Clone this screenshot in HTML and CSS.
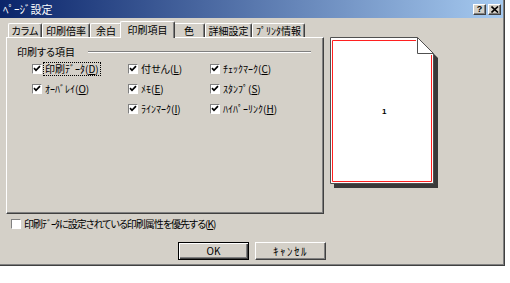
FILE: index.html
```html
<!DOCTYPE html>
<html lang="ja">
<head>
<meta charset="utf-8">
<title>ﾍﾟｰｼﾞ設定</title>
<link rel="stylesheet" href="styles.css">
</head>
<body>
<div class="dialog">
  <div class="titlebar">
    <span class="title">ﾍﾟｰｼﾞ設定</span>
    <div class="tbtns">
      <span class="tbtn help">?</span>
      <span class="tbtn close"><svg width="8" height="7" viewBox="0 0 8 7"><path d="M0.5 0.5 L7 6.5 M7 0.5 L0.5 6.5" stroke="#000" stroke-width="1.6" fill="none"/></svg></span>
    </div>
  </div>
  <div class="content">
    <div class="leftcol">
      <div class="tabs">
        <span class="tab">カラム</span>
        <span class="tab">印刷倍率</span>
        <span class="tab">余白</span>
        <span class="tab active">印刷項目</span>
        <span class="tab">色</span>
        <span class="tab">詳細設定</span>
        <span class="tab">ﾌﾟﾘﾝﾀ情報</span>
      </div>
      <div class="panel">
        <div class="glabel"><span>印刷する項目</span><span class="gline"></span></div>
        <div class="grid">
          <div class="chk"><span class="box"><svg width="8" height="8" viewBox="0 0 8 8"><path d="M1 3.2 L3 5.3 L7 1.2" stroke="#000" stroke-width="1.7" fill="none"/></svg></span><span class="lbl focus">印刷ﾃﾞｰﾀ(<u>D</u>)</span></div>
          <div class="chk"><span class="box"><svg width="8" height="8" viewBox="0 0 8 8"><path d="M1 3.2 L3 5.3 L7 1.2" stroke="#000" stroke-width="1.7" fill="none"/></svg></span><span class="lbl">付せん(<u>L</u>)</span></div>
          <div class="chk"><span class="box"><svg width="8" height="8" viewBox="0 0 8 8"><path d="M1 3.2 L3 5.3 L7 1.2" stroke="#000" stroke-width="1.7" fill="none"/></svg></span><span class="lbl">ﾁｪｯｸﾏｰｸ(<u>C</u>)</span></div>
          <div class="chk"><span class="box"><svg width="8" height="8" viewBox="0 0 8 8"><path d="M1 3.2 L3 5.3 L7 1.2" stroke="#000" stroke-width="1.7" fill="none"/></svg></span><span class="lbl">ｵｰﾊﾞﾚｲ(<u>O</u>)</span></div>
          <div class="chk"><span class="box"><svg width="8" height="8" viewBox="0 0 8 8"><path d="M1 3.2 L3 5.3 L7 1.2" stroke="#000" stroke-width="1.7" fill="none"/></svg></span><span class="lbl">ﾒﾓ(<u>E</u>)</span></div>
          <div class="chk"><span class="box"><svg width="8" height="8" viewBox="0 0 8 8"><path d="M1 3.2 L3 5.3 L7 1.2" stroke="#000" stroke-width="1.7" fill="none"/></svg></span><span class="lbl">ｽﾀﾝﾌﾟ(<u>S</u>)</span></div>
          <div class="chk col2"><span class="box"><svg width="8" height="8" viewBox="0 0 8 8"><path d="M1 3.2 L3 5.3 L7 1.2" stroke="#000" stroke-width="1.7" fill="none"/></svg></span><span class="lbl">ﾗｲﾝﾏｰｸ(<u>I</u>)</span></div>
          <div class="chk"><span class="box"><svg width="8" height="8" viewBox="0 0 8 8"><path d="M1 3.2 L3 5.3 L7 1.2" stroke="#000" stroke-width="1.7" fill="none"/></svg></span><span class="lbl">ﾊｲﾊﾟｰﾘﾝｸ(<u>H</u>)</span></div>
        </div>
      </div>
      <div class="chk bottomchk"><span class="box"></span><span class="lbl">印刷ﾃﾞｰﾀに設定されている印刷属性を優先する(<u>K</u>)</span></div>
    </div>
    <div class="preview">
      <svg width="109" height="152" viewBox="0 0 109 152">
        <polygon points="4,4 91,4 108,21 108,151 4,151" fill="#3a3a3a"/>
        <polygon points="0.5,0.5 87.5,0.5 103.5,16.5 103.5,146.5 0.5,146.5" fill="#fff" stroke="#505050"/>
        <polyline points="86,3.5 2.5,3.5 2.5,144.5 101.5,144.5 101.5,18" fill="none" stroke="#ff2020"/>
        <polyline points="87.5,0.5 87.5,16.5 103.5,16.5" fill="none" stroke="#505050"/>
        <text x="52" y="77" class="pnum">1</text>
      </svg>
    </div>
  </div>
  <div class="buttons">
    <span class="btn default">OK</span>
    <span class="btn cancel">ｷｬﾝｾﾙ</span>
  </div>
</div>
</body>
</html>
```

FILE: styles.css
```css
* { box-sizing: border-box; margin: 0; padding: 0; }
html, body { width: 510px; height: 283px; background: #fff; overflow: hidden; }
body {
  font-family: "Noto Sans CJK JP", "Noto Sans", sans-serif;
  font-size: 10px;
  color: #000;
  font-feature-settings: "palt";
}
.dialog {
  width: 505px;
  height: 266px;
  background: #d4d0c8;
  border-right: 1px solid #404040;
  border-bottom: 1px solid #404040;
  box-shadow: inset -1px -1px #808080;
  display: flex;
  flex-direction: column;
}
.titlebar {
  height: 18px;
  margin-right: 1px;
  background: linear-gradient(to right, #0a246a, #a6caf0);
  display: flex;
  align-items: center;
  padding: 0 2px 0 3px;
}
.title { color: #fff; font-size: 11px; line-height: 14px; }
.tbtns { margin-left: auto; display: flex; gap: 2px; }
.tbtn {
  width: 13px; height: 11px;
  background: #d4d0c8;
  border: 1px solid; border-color: #fff #404040 #404040 #fff;
  box-shadow: inset -1px -1px #808080;
  display: flex; align-items: center; justify-content: center;
  font-family: "Liberation Sans", sans-serif;
  font-weight: bold; font-size: 9px; line-height: 9px;
}
.content { display: flex; padding: 3px 0 0 6px; }
.leftcol { width: 318px; display: flex; flex-direction: column; }
.tabs { display: flex; height: 16px; padding-left: 2px; }
.tab {
  height: 14px; margin-top: 2px;
  border-top: 1px solid #fff; border-left: 1px solid #fff; border-right: 1px solid #404040;
  border-radius: 2px 2px 0 0;
  box-shadow: inset -1px 0 #808080;
  text-align: center; line-height: 13px; white-space: nowrap;
}
.tab:nth-child(1) { width: 34px; }
.tab:nth-child(2) { width: 48px; }
.tab:nth-child(3) { width: 32px; }
.tab:nth-child(4) { width: 55px; }
.tab:nth-child(5) { width: 32px; }
.tab:nth-child(6) { width: 47px; }
.tab:nth-child(7) { width: 53px; }
.tab.active {
  height: 17px; margin: 0 -2px -1px -2px;
  background: #d4d0c8;
  position: relative; z-index: 2;
  line-height: 15px;
}
.panel {
  height: 177px;
  border: 1px solid; border-color: #fff #404040 #404040 #fff;
  box-shadow: inset -1px -1px #808080;
  padding: 8px 0 0 10px;
}
.glabel { display: flex; align-items: center; height: 12px; line-height: 12px; }
.gline {
  margin-left: auto; margin-right: 12px;
  width: 223px; height: 2px;
  border-top: 1px solid #808080; border-bottom: 1px solid #fff;
}
.grid {
  margin-top: 6px; padding-left: 15px;
  display: grid;
  grid-template-columns: 96px 82px 1fr;
  grid-auto-rows: 10px;
  row-gap: 10px;
}
.col2 { grid-column: 2; }
.chk { display: flex; align-items: center; height: 10px; white-space: nowrap; }
.box {
  width: 10px; height: 10px; flex: none;
  background: #fff;
  border: 1px solid; border-color: #808080 #fff #fff #808080;
  display: flex; align-items: center; justify-content: center;
}
.lbl { margin-left: 3px; line-height: 12px; }
.lbl u { text-underline-offset: 1px; }
.focus { outline: 1px dotted #000; outline-offset: 0; padding: 0 1px; margin-left: 2px; }
.bottomchk { margin: 5px 0 0 5px; }
.bottomchk .lbl { letter-spacing: -1px; }
.preview { margin-left: 6px; margin-top: 16px; }
.preview svg { display: block; }
.pnum { font-family: "Liberation Sans", sans-serif; font-weight: bold; font-size: 8px; }
.buttons { display: flex; justify-content: center; gap: 6px; margin-top: 13px; }
.btn {
  width: 71px; height: 18px;
  border: 1px solid; border-color: #fff #404040 #404040 #fff;
  box-shadow: inset -1px -1px #808080;
  text-align: center; line-height: 16px;
}
.btn.cancel { font-size: 11px; letter-spacing: 1.5px; }
.btn.default {
  border: 1px solid #000;
  box-shadow: inset 1px 1px #fff, inset -1px -1px #404040, inset -2px -2px #808080;
}
```
